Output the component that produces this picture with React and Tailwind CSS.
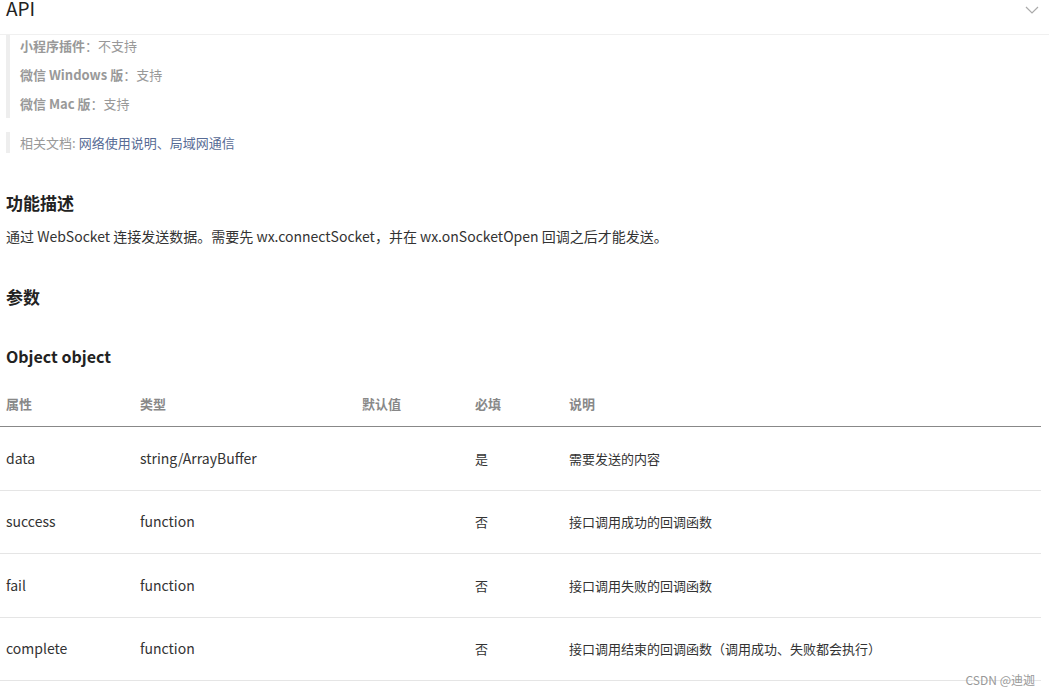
export default function App() {
  const font = { fontFamily: '"Noto Sans CJK SC", "Noto Sans", sans-serif' };
  const rows = [
    ["data", "string/ArrayBuffer", "", "是", "需要发送的内容"],
    ["success", "function", "", "否", "接口调用成功的回调函数"],
    ["fail", "function", "", "否", "接口调用失败的回调函数"],
    ["complete", "function", "", "否", "接口调用结束的回调函数（调用成功、失败都会执行）"],
  ];
  const cols = "grid grid-cols-[134px_222px_113px_94px_1fr] px-[6px]";
  return (
    <div className="w-[1049px] h-[697px] bg-white relative overflow-hidden text-[#333]" style={font}>
      <div className="h-[40px] border-b border-[#f0f0f0] flex items-start justify-between pl-[6px] pr-[10px] -mt-[5px]">
        <span className="text-[19px] text-[#222] leading-[26px]">API</span>
        <svg width="14" height="10" viewBox="0 0 14 10" className="mt-[10px]"><path d="M1 2l6 6 6-6" fill="none" stroke="#aaa" strokeWidth="1.2"/></svg>
      </div>
      <div className="ml-[6px] border-l-[4px] border-[#eee] pl-[10px] text-[13px] text-[#999] flex flex-col">
        <div className="h-[29px] flex items-center -mt-[4px]"><b>小程序插件</b>：不支持</div>
        <div className="h-[29px] flex items-center"><b>微信 Windows 版</b>：支持</div>
        <div className="h-[29px] flex items-center"><b>微信 Mac 版</b>：支持</div>
      </div>
      <div className="ml-[6px] mt-[14px] border-l-[4px] border-[#eee] pl-[10px] text-[13px] text-[#999] h-[21px] flex items-center">
        相关文档: <span className="text-[#576b95] ml-[3px]">网络使用说明、局域网通信</span>
      </div>
      <h2 className="px-[6px] mt-[38px] text-[17px] font-bold text-[#222] leading-[24px]">功能描述</h2>
      <p className="px-[6px] mt-[10px] text-[14px] text-[#333] leading-[22px]">通过 WebSocket 连接发送数据。需要先 wx.connectSocket，并在 wx.onSocketOpen 回调之后才能发送。</p>
      <h2 className="px-[6px] mt-[38px] text-[17px] font-bold text-[#222] leading-[24px]">参数</h2>
      <h3 className="px-[6px] mt-[35px] text-[16px] font-bold text-[#222] leading-[24px]">Object object</h3>
      <div className="mr-[8px] mt-[14px]">
        <div className={cols + " h-[45px] items-center border-b border-[#888] text-[13px] font-bold text-[#888]"}>
          <span>属性</span><span>类型</span><span>默认值</span><span>必填</span><span>说明</span>
        </div>
        {rows.map((r) => (
          <div key={r[0]} className={cols + " h-[63.5px] items-center border-b border-[#e5e5e5] text-[14px] text-[#333]"}>
            <span>{r[0]}</span><span>{r[1]}</span><span>{r[2]}</span><span className="text-[13px]">{r[3]}</span><span className="text-[13px]">{r[4]}</span>
          </div>
        ))}
      </div>
      <div className="absolute right-[14px] bottom-[8px] text-[12px] text-[#999]">CSDN @迪迦</div>
    </div>
  );
}
